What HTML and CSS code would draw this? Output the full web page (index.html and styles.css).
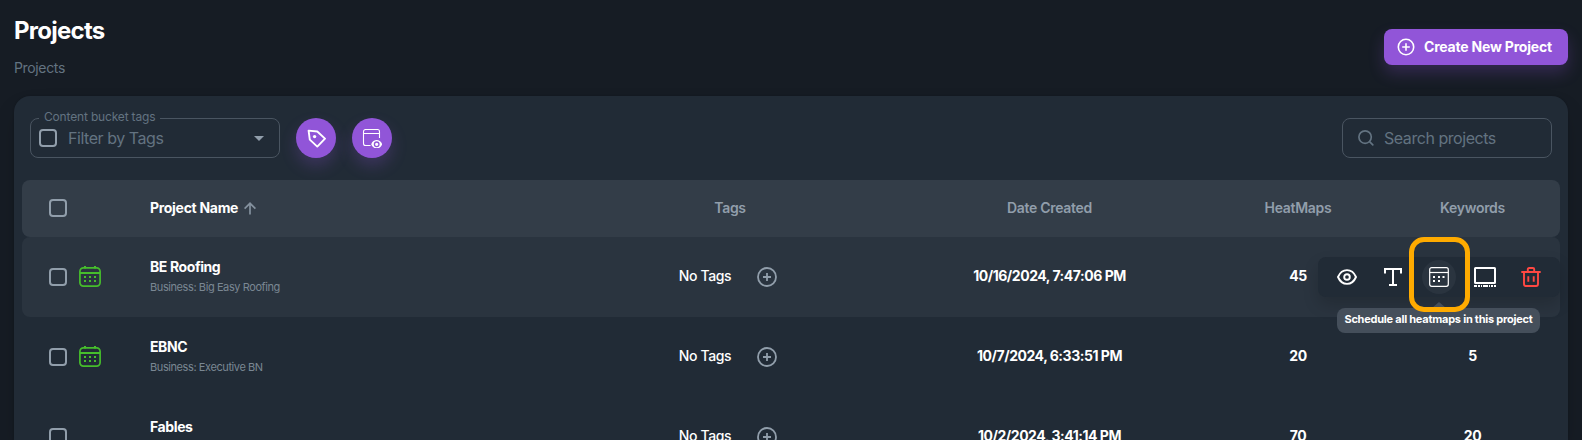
FILE: index.html
```html
<!DOCTYPE html>
<html lang="en">
<head>
<meta charset="utf-8">
<title>Projects</title>
<link rel="stylesheet" href="styles.css">
</head>
<body>
<header class="page-head">
  <div>
    <h1 class="title"><span class="t">Projects</span></h1>
    <p class="crumb"><span class="t">Projects</span></p>
  </div>
  <button class="create">
    <svg width="18" height="18" viewBox="0 0 18 18" fill="none" stroke="currentColor" stroke-width="1.6"><circle cx="9" cy="9" r="7.7"/><path d="M9 5.2v7.6M5.2 9h7.6"/></svg>
    <span class="t">Create New Project</span>
  </button>
</header>
<main class="panel">
  <div class="toolbar">
    <div class="filter">
      <span class="legend t">Content bucket tags</span>
      <span class="check"></span>
      <span class="placeholder t">Filter by Tags</span>
      <svg class="caret" width="10" height="5" viewBox="0 0 10 5"><path d="M0 0h10L5 5z" fill="#919eab"/></svg>
    </div>
    <button class="round">
      <svg width="20" height="20" viewBox="0 0 20 20" fill="none" stroke="#fff" stroke-width="1.9" stroke-linejoin="round"><path d="M2.600 2.600 11.300 3.500 19 10.600 11.300 18.600 3.800 11.600z"/><circle cx="8.600" cy="8.600" r="1.700" fill="#fff" stroke="none"/></svg>
    </button>
    <button class="round">
      <svg width="20" height="20" viewBox="0 0 20 20" fill="none" stroke="#fff"><path d="M8.600 17.500H3.500a2 2 0 0 1-2-2V3.500a2 2 0 0 1 2-2h12a2 2 0 0 1 2 2V10M1.500 5.500h16" stroke-width="1.100"/><path d="M9.200 16.300c2-5.600 9-5.600 11 0-2 5.600-9 5.600-11 0z" fill="#fff" stroke="none"/><circle cx="14.700" cy="16.300" r="2.300" stroke="#9155d8" stroke-width="1.300" fill="#fff"/></svg>
    </button>
    <div class="search">
      <svg width="16" height="16" viewBox="0 0 16 16" fill="none" stroke="#637381" stroke-width="1.700" stroke-linecap="round"><circle cx="7.100" cy="7.100" r="6.200"/><path d="m11.800 11.800 3 3"/></svg>
      <span class="placeholder t">Search projects</span>
    </div>
  </div>

  <div class="table">
    <div class="row head">
      <div class="cell picks"><span class="check"></span></div>
      <div class="cell name sorted"><span class="t">Project Name</span>
        <svg width="12" height="13" viewBox="0 0 12 13" fill="none" stroke="#84919e" stroke-width="1.700"><path d="M6 12.600V1.400M.6 6.600 6 1.300l5.400 5.300"/></svg>
      </div>
      <div class="cell"><span class="t">Tags</span></div>
      <div class="cell"><span class="t">Date Created</span></div>
      <div class="cell"><span class="t">HeatMaps</span></div>
      <div class="cell"><span class="t">Keywords</span></div>
    </div>

    <div class="row hover">
      <div class="cell picks"><span class="check"></span><svg class="cal" viewBox="0 0 22 21"><use href="#cal"/></svg></div>
      <div class="cell name"><b class="t">BE Roofing</b><small class="t">Business: Big Easy Roofing</small></div>
      <div class="cell tags"><span class="t">No Tags</span><svg class="add" viewBox="0 0 20 20"><use href="#plus"/></svg></div>
      <div class="cell date"><span class="t">10/16/2024, 7:47:06 PM</span></div>
      <div class="cell num"><span class="t">45</span></div>
      <div class="cell num"></div>

      <div class="actions">
        <span class="act"><svg width="20" height="16" viewBox="0 0 20 16" fill="none" stroke="#fff" stroke-width="1.900"><path d="M1 8c4-9.200 14-9.200 18 0-4 9.200-14 9.200-18 0z" stroke-linejoin="round"/><circle cx="10" cy="8" r="2.800"/></svg></span>
        <span class="act"><svg width="18" height="18" viewBox="0 0 18 18" fill="none" stroke="#fff" stroke-width="2"><path d="M1 5.500V1h16v4.500M9 1v16M5 17h8"/></svg></span>
        <span class="act current"><svg width="20" height="20" viewBox="0 0 20 20" fill="none" stroke="#fff" stroke-width="1.200"><rect x=".7" y=".7" width="18.600" height="18.600" rx="2"/><path d="M.7 5.500h18.600"/><path d="M4 10h2M9 10h2M13.500 10h2M4 14h2M9 14h2" stroke-width="1.800"/></svg></span>
        <span class="act"><svg width="22" height="20" viewBox="0 0 22 20" fill="none" stroke="#fff" stroke-width="2"><rect x="1" y="1" width="20" height="15" rx=".5"/><path d="M0 19h3M4 19h2M7 19h1M9 19h5M15 19h1M17 19h2M20 19h2"/></svg></span>
        <span class="act"><svg width="20" height="20" viewBox="0 0 20 20" fill="none" stroke="#ff4842" stroke-width="1.900"><path d="M.3 5h19.400M6.800 4.500V2.300Q6.800 1 8.100 1h3.800q1.300 0 1.300 1.300v2.200M3 5v12.100q0 1.900 1.900 1.900h10.200q1.900 0 1.900-1.900V5M7.300 9.300v5.500M12.700 9.300v5.500"/></svg></span>
        <div class="tip"><span class="t">Schedule all heatmaps in this project</span></div>
        <div class="highlight"></div>
      </div>
    </div>

    <div class="row">
      <div class="cell picks"><span class="check"></span><svg class="cal" viewBox="0 0 22 21"><use href="#cal"/></svg></div>
      <div class="cell name"><b class="t">EBNC</b><small class="t">Business: Executive BN</small></div>
      <div class="cell tags"><span class="t">No Tags</span><svg class="add" viewBox="0 0 20 20"><use href="#plus"/></svg></div>
      <div class="cell date"><span class="t">10/7/2024, 6:33:51 PM</span></div>
      <div class="cell num"><span class="t">20</span></div>
      <div class="cell num"><span class="t">5</span></div>
    </div>

    <div class="row">
      <div class="cell picks"><span class="check"></span></div>
      <div class="cell name"><b class="t">Fables</b><small></small></div>
      <div class="cell tags"><span class="t">No Tags</span><svg class="add" viewBox="0 0 20 20"><use href="#plus"/></svg></div>
      <div class="cell date"><span class="t">10/2/2024, 3:41:14 PM</span></div>
      <div class="cell num"><span class="t">70</span></div>
      <div class="cell num"><span class="t">20</span></div>
    </div>
  </div>
</main>

<svg class="defs" width="0" height="0">
  <symbol id="cal" viewBox="0 0 22 21"><g fill="none" stroke="#46bd2c"><rect x=".9" y="1.900" width="20.200" height="18.200" rx="3.500" stroke-width="1.700"/><path d="M.8 7h20.400" stroke-width="2"/><path d="M6 0v2.500M16 0v2.500" stroke-width="2"/><path d="M5 11h2M10 11h2M15 11h2M5 15h2M10 15h2M15 15h2" stroke-width="2"/></g></symbol>
  <symbol id="plus" viewBox="0 0 20 20"><g fill="none" stroke="#919eab" stroke-width="1.800"><circle cx="10" cy="10" r="9"/><path d="M10 6v8M6 10h8"/></g></symbol>
</svg>
</body>
</html>
```

FILE: styles.css
```css
* { box-sizing: border-box; }

body {
  margin: 0;
  height: 440px;
  overflow: hidden;
  background: #161c24;
  color: #fff;
  font: 400 14px/22px Inter, "Liberation Sans", sans-serif;
}

h1, p { margin: 0; }
svg { display: block; flex: none; }
button { border: 0; color: inherit; font: inherit; padding: 0; }
.t { white-space: nowrap; }
.defs { position: absolute; }

.page-head {
  display: flex;
  justify-content: space-between;
  height: 96px;
  padding: 13px 14px 0;
}
.title { font-size: 24px; line-height: 36px; font-weight: 700; letter-spacing: -.75px; }
.crumb { margin-top: 8px; color: #637381; letter-spacing: -.35px; }

.create {
  display: flex;
  align-items: center;
  gap: 9px;
  width: 184px;
  height: 36px;
  margin-top: 16px;
  padding-left: 13px;
  border-radius: 8px;
  background: #9155d8;
  box-shadow: 0 8px 16px rgba(145, 85, 216, .24);
  font-weight: 700;
  letter-spacing: -.2px;
}
.create .t { padding-bottom: 1px; }

.panel {
  height: 344px;
  overflow: hidden;
  margin: 0 14px;
  padding-top: 22px;
  border-radius: 16px 16px 0 0;
  background: #212b36;
  box-shadow: 0 0 2px rgba(0, 0, 0, .2), 0 12px 24px -4px rgba(0, 0, 0, .2);
}

.toolbar { display: flex; gap: 16px; height: 62px; padding: 0 16px; }
.filter, .search {
  display: flex;
  align-items: center;
  height: 40px;
  border: 1px solid #4a5561;
  border-radius: 8px;
  color: #637381;
  font-size: 16px;
}
.filter { position: relative; width: 250px; padding: 0 15px 0 8px; gap: 11px; }
.search { width: 210px; margin-left: auto; padding-left: 15px; gap: 10px; }
.placeholder { padding-bottom: 1px; letter-spacing: -.45px; }
.caret { margin-left: auto; }
.legend {
  position: absolute;
  left: 8px;
  top: -9px;
  padding: 0 5px;
  background: #212b36;
  font-size: 12px;
  line-height: 14px;
  letter-spacing: -.17px;
}
.check {
  flex: none;
  width: 18px;
  height: 18px;
  border: 2px solid #919eab;
  border-radius: 4px;
}

.round {
  display: grid;
  place-items: center;
  width: 40px;
  height: 40px;
  border-radius: 50%;
  background: #9155d8;
  box-shadow: 0 8px 16px rgba(145, 85, 216, .24);
}

.table { margin: 0 8px; }
.row {
  position: relative;
  display: grid;
  grid-template-columns: 112px 438px 316px 323px 174px 175px;
  height: 80px;
  border-radius: 8px;
}
.head { height: 57px; background: #333d48; color: #919eab; font-weight: 600; letter-spacing: -.3px; }
.head .cell { padding-bottom: 1px; }
.hover { background: #2a343f; z-index: 1; }
.cell { display: flex; align-items: center; justify-content: center; }
.picks { justify-content: flex-start; padding-left: 27px; gap: 12px; }
.cal { width: 22px; height: 21px; margin-top: -1px; }
.name { flex-direction: column; align-items: flex-start; padding: 0 0 2px 16px; letter-spacing: -.4px; }
.name b { line-height: 22px; }
.name small { min-height: 18px; color: #7a8793; font-size: 11px; line-height: 18px; letter-spacing: -.41px; }
.name.sorted { flex-direction: row; align-items: center; justify-content: flex-start; gap: 6px; color: #fff; font-weight: 700; letter-spacing: -.3px; }
.tags { font-weight: 500; letter-spacing: -.4px; gap: 26px; padding-right: 4px; }
.tags .t { padding-bottom: 2px; }
.add { width: 20px; height: 20px; }
.date { padding-bottom: 2px; font-weight: 700; letter-spacing: -.47px; }
.num { padding-bottom: 2px; font-weight: 700; letter-spacing: -.4px; }

.actions {
  position: absolute;
  right: 0;
  top: 20px;
  display: grid;
  grid-template-columns: repeat(5, 46px);
  width: 242px;
  height: 40px;
  padding: 0 6px;
  border-radius: 8px;
  background: #212b36;
  box-shadow: 0 8px 16px rgba(0, 0, 0, .16);
}
.act { display: grid; place-items: center; }
.current { width: 34px; height: 34px; margin: 3px 6px; border-radius: 50%; background: #2a343f; }
.tip {
  position: absolute;
  left: 19px;
  top: 51px;
  width: 203px;
  height: 25px;
  border-radius: 8px;
  background: #454f5b;
  text-align: center;
  font-size: 11px;
  line-height: 22px;
  font-weight: 700;
  letter-spacing: -.24px;
}
.tip::before {
  content: "";
  position: absolute;
  left: 95px;
  top: -6px;
  border: 7px solid transparent;
  border-top: 0;
  border-bottom: 6px solid #454f5b;
}
.highlight {
  position: absolute;
  left: 91px;
  top: -20px;
  width: 61px;
  height: 75px;
  border: 5px solid #ffab00;
  border-radius: 15px;
}
```
